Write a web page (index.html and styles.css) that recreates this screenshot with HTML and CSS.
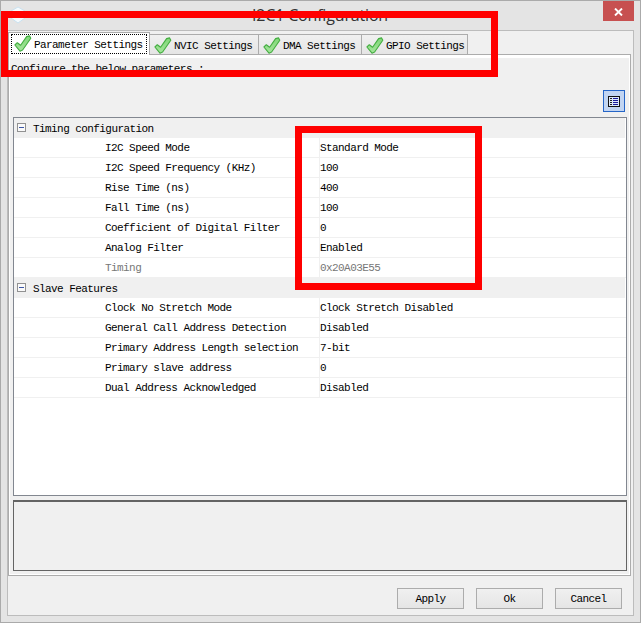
FILE: index.html
```html
<!DOCTYPE html>
<html lang="en">
<head>
<meta charset="utf-8">
<title>I2C1 Configuration</title>
<link rel="stylesheet" href="styles.css">
</head>
<body>
<svg width="0" height="0" class="defs">
  <defs>
    <linearGradient id="leaf" x1="0" y1="0" x2="0" y2="1"><stop offset="0" stop-color="#7fd676"/><stop offset="1" stop-color="#a5e59c"/></linearGradient>
    <symbol id="check" viewBox="0 0 18 18"><path d="M.9 10 3.3 7.7l3.3 2.5L12.6 1.6 15.6.9 16.8 3.2 8.6 15 6 16.2Z" fill="url(#leaf)" stroke="#43ad40" stroke-width="1.1" stroke-linejoin="round"/></symbol>
  </defs>
</svg>
<div class="window">
  <header class="titlebar">
    <svg class="app-icon" width="16" height="18" viewBox="0 0 16 18"><path d="M8 1 15 5V12L8 17 1 12V5Z" fill="#f5fafd" stroke="#c9e2f0"/><path d="M8 5V12M5 9H11" stroke="#8fc5e5"/></svg>
    <h1>I2C1 Configuration</h1>
    <button class="close" aria-label="Close"><svg width="9" height="8" viewBox="0 0 9 8"><path d="M1 .5 8 7.5M8 .5 1 7.5" stroke="#fff" stroke-width="1.9"/></svg></button>
  </header>
  <main class="client">
    <nav class="tabs">
      <div class="tab selected"><div class="focus"><svg width="18" height="18"><use href="#check"/></svg><span>Parameter Settings</span></div></div>
      <div class="tab nvic"><svg width="18" height="18"><use href="#check"/></svg><span>NVIC Settings</span></div>
      <div class="tab dma"><svg width="18" height="18"><use href="#check"/></svg><span>DMA Settings</span></div>
      <div class="tab gpio"><svg width="18" height="18"><use href="#check"/></svg><span>GPIO Settings</span></div>
    </nav>
    <section class="pane">
      <p class="hint">Configure the below parameters :</p>
      <div class="toolbar"><button class="tool" aria-label="Categories"><svg width="12" height="11" viewBox="0 0 12 11"><rect x=".5" y=".5" width="11" height="10" fill="#dce8fa" stroke="#111"/><path d="M2 2.5H4M2 4.5H4M2 6.5H4M2 8.5H4" stroke="#222"/><path d="M5 2.5H10M5 4.5H10M5 6.5H10M5 8.5H10" stroke="#1a1a9a"/></svg></button></div>
      <div class="grid">
        <div class="category"><i class="toggle"></i>Timing configuration</div>
        <div class="row"><span>I2C Speed Mode</span><span>Standard Mode</span></div>
        <div class="row"><span>I2C Speed Frequency (KHz)</span><span>100</span></div>
        <div class="row"><span>Rise Time (ns)</span><span>400</span></div>
        <div class="row"><span>Fall Time (ns)</span><span>100</span></div>
        <div class="row"><span>Coefficient of Digital Filter</span><span>0</span></div>
        <div class="row"><span>Analog Filter</span><span>Enabled</span></div>
        <div class="row disabled"><span>Timing</span><span>0x20A03E55</span></div>
        <div class="category"><i class="toggle"></i>Slave Features</div>
        <div class="row"><span>Clock No Stretch Mode</span><span>Clock Stretch Disabled</span></div>
        <div class="row"><span>General Call Address Detection</span><span>Disabled</span></div>
        <div class="row"><span>Primary Address Length selection</span><span>7-bit</span></div>
        <div class="row"><span>Primary slave address</span><span>0</span></div>
        <div class="row"><span>Dual Address Acknowledged</span><span>Disabled</span></div>
      </div>
      <div class="description"></div>
    </section>
    <footer class="actions"><button>Apply</button><button>Ok</button><button>Cancel</button></footer>
  </main>
</div>
<div class="mark mark-tabs"></div>
<div class="mark mark-values"></div>
</body>
</html>
```
FILE: styles.css
```css
* { box-sizing: border-box; }
body { margin: 0; overflow: hidden; }
.defs { position: absolute; }
.window {
  width: 641px; height: 623px; padding: 0 6px 6px;
  border: 1px solid #aaa; background: #e4e4e4;
  font: 11px/20px "Liberation Mono", monospace; letter-spacing: -.57px; color: #000;
  white-space: nowrap;
}
button { padding: 0; margin: 0; font: inherit; letter-spacing: inherit; color: inherit; }
.titlebar { height: 29px; display: flex; align-items: flex-start; }
.app-icon { margin: 5px 0 0 3px; }
h1 {
  flex: 1; margin: 3px 0 0 8px; padding-left: 218px;
  font: 16px/22px "Open Sans", sans-serif; letter-spacing: -.17px; color: #333;
}
.close { width: 31px; height: 20px; border: 0; background: #c75050; display: flex; align-items: center; justify-content: center; padding-top: 2px; }
.client { height: 586px; border: 1px solid #bcbcbc; background: #f0f0f0; }
.tabs { height: 23px; padding-top: 1px; display: flex; align-items: flex-end; }
.tab {
  height: 20px; padding-left: 4px; display: flex; align-items: center; gap: 2px;
  border: 1px solid #acacac; border-left-width: 0; border-bottom: 0;
  background: linear-gradient(#f0f0f0, #e5e5e5);
}
.tab span { padding-top: 3px; }
.tab svg { flex: none; margin-top: 2px; }
.selected { position: relative; width: 142px; height: 23px; margin-bottom: -1px; padding: 0 2px 0 2px; border-left-width: 1px; background: #fff; }
.focus { width: 137px; height: 20px; padding-left: 2px; display: flex; align-items: center; gap: 2px; border: 1px dotted #000; }
.focus svg { margin-top: -1px; }
.focus span { padding-top: 1px; }
.nvic { width: 109px; }
.dma { width: 103px; }
.gpio { width: 106px; }
.pane {
  width: 623px; height: 522px; padding: 3px 3px 3px 4px;
  border: 1px solid #acacac; background: #f0f0f0; box-shadow: inset 1px 0 #fff, inset 0 3px #fff, inset -1px -1px #fff;
}
.hint { margin: 0; height: 32px; padding-top: 1px; text-indent: -2px; }
.toolbar { height: 27px; display: flex; justify-content: flex-end; }
.tool { width: 22px; height: 22px; margin-right: 2px; border: 1px solid #2565c7; background: #c2d5f2; display: flex; align-items: center; justify-content: center; }
.grid { width: 614px; height: 379px; border: 1px solid #828790; background: #fff; }
.category { height: 20px; padding-left: 3px; display: flex; align-items: center; background: #f0f0f0; margin-right: 1px; padding-top: 1px; }
.toggle { width: 9px; height: 9px; margin: -3px 7px 0 0; border: 1px solid #919191; background: linear-gradient(#3d57a6, #3d57a6) center / 5px 1px no-repeat #fafafa; }
.row { height: 20px; display: grid; grid-template-columns: 306px 1fr; border-bottom: 1px solid #f0f0f0; }
.row span { padding-top: 1px; line-height: 19px; }
.row span:first-child { padding-left: 91px; border-right: 1px solid #f0f0f0; }
.disabled { color: #777; }
.description { width: 614px; height: 71px; margin-top: 4px; border: 1px solid #646464; border-top-width: 2px; }
.actions { display: flex; gap: 12px; justify-content: flex-end; padding: 12px 11px 0 0; }
.actions button { width: 67px; height: 21px; border: 1px solid #acacac; background: linear-gradient(#f0f0f0, #e5e5e5); padding-top: 1px; line-height: 18px; }
.mark { position: absolute; border: 7px solid #f00; }
.mark-tabs { left: 1px; top: 11px; width: 497px; height: 66px; }
.mark-values { left: 295px; top: 126px; width: 187px; height: 164px; }
```
